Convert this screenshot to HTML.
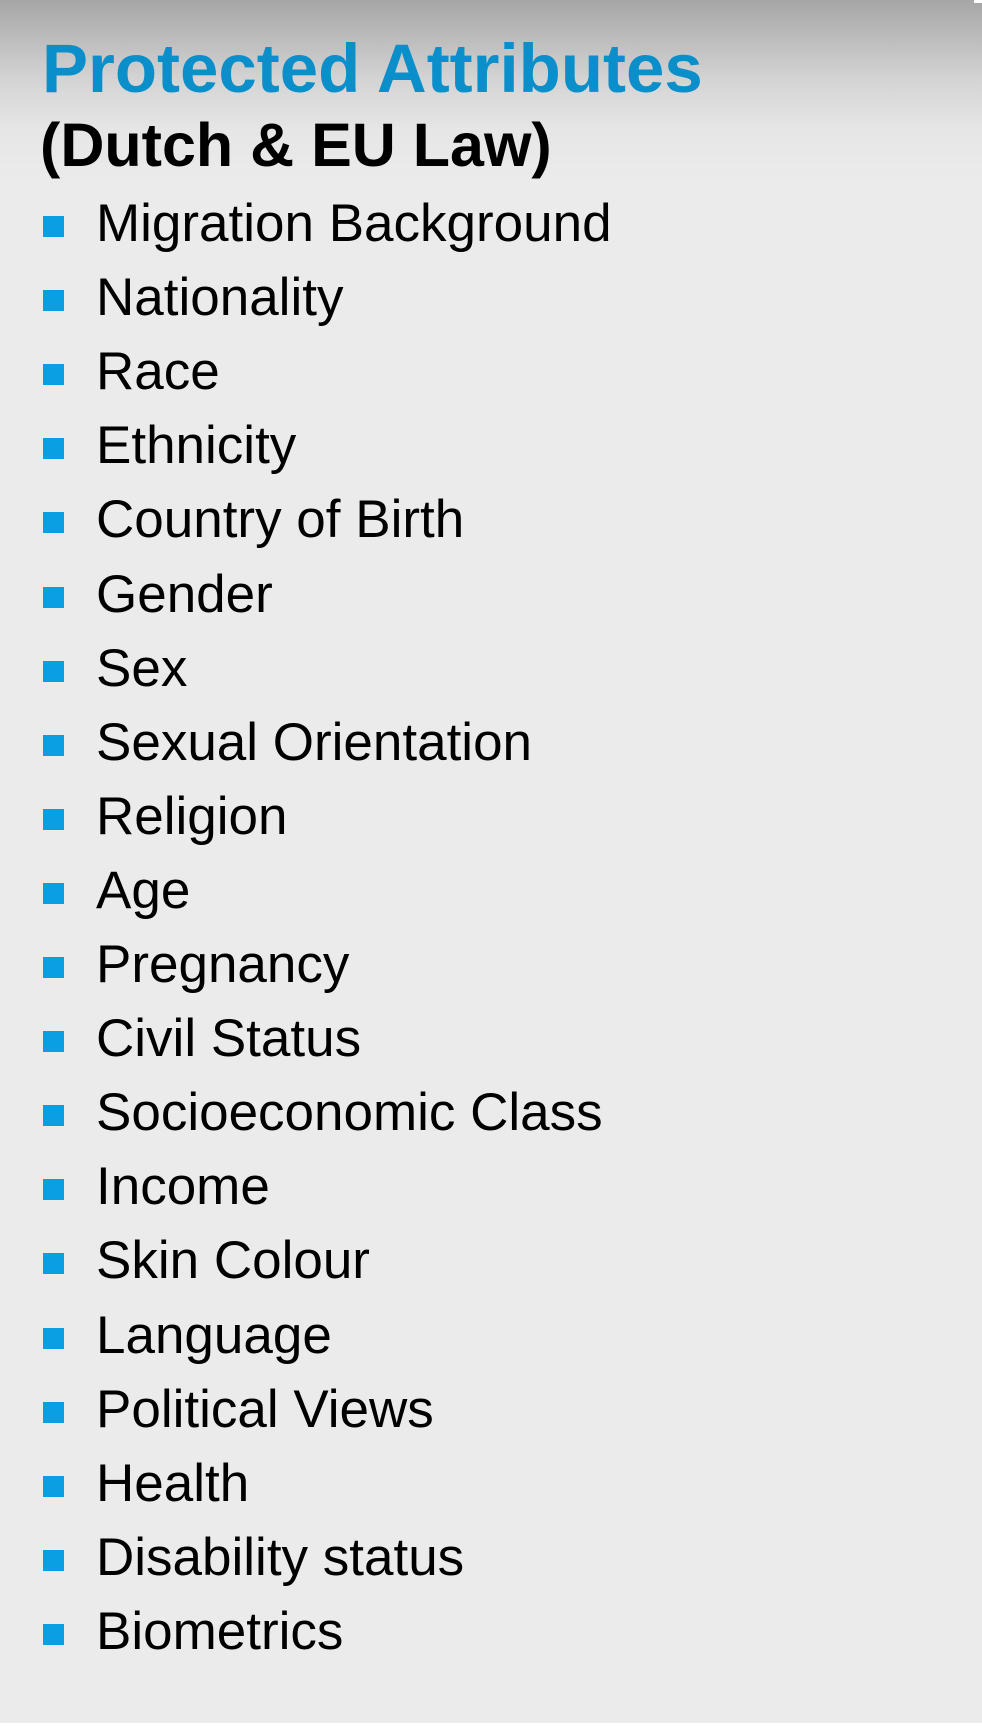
<!DOCTYPE html>
<html><head><meta charset="utf-8"><style>
html,body{margin:0;padding:0}
body{width:982px;height:1730px;position:relative;overflow:hidden;
background:linear-gradient(#a6a6a6 0px,#d4d4d4 80px,#e6e6e6 130px,#ebebeb 180px,#ebebeb 100%);
font-family:"Liberation Sans",sans-serif;}
.t{position:absolute;left:42px;top:34px;font-size:69px;font-weight:bold;color:#0b8fca;white-space:nowrap;line-height:1}
.s{position:absolute;left:40px;top:115px;font-size:61px;font-weight:bold;color:#000;white-space:nowrap;line-height:1}
.li{position:absolute;left:96px;font-size:53px;color:#000;white-space:nowrap;line-height:1;margin-top:-6px}
.b{position:absolute;left:43px;width:21px;height:21px;background:#0a9fe2}
.bot{position:absolute;left:0;right:0;top:1723px;bottom:0;background:#fff}
.cr{position:absolute;right:0;top:0;width:8px;height:3px;background:#fff}
</style></head><body>
<div class="cr"></div>
<div class="t">Protected Attributes</div>
<div class="s">(Dutch &amp; EU Law)</div>
<div class="li" style="top:203px">Migration Background</div><div class="b" style="top:216px"></div>
<div class="li" style="top:277px">Nationality</div><div class="b" style="top:290px"></div>
<div class="li" style="top:351px">Race</div><div class="b" style="top:364px"></div>
<div class="li" style="top:425px">Ethnicity</div><div class="b" style="top:438px"></div>
<div class="li" style="top:499px">Country of Birth</div><div class="b" style="top:512px"></div>
<div class="li" style="top:574px">Gender</div><div class="b" style="top:587px"></div>
<div class="li" style="top:648px">Sex</div><div class="b" style="top:661px"></div>
<div class="li" style="top:722px">Sexual Orientation</div><div class="b" style="top:735px"></div>
<div class="li" style="top:796px">Religion</div><div class="b" style="top:809px"></div>
<div class="li" style="top:870px">Age</div><div class="b" style="top:883px"></div>
<div class="li" style="top:944px">Pregnancy</div><div class="b" style="top:957px"></div>
<div class="li" style="top:1018px">Civil Status</div><div class="b" style="top:1031px"></div>
<div class="li" style="top:1092px">Socioeconomic Class</div><div class="b" style="top:1105px"></div>
<div class="li" style="top:1166px">Income</div><div class="b" style="top:1179px"></div>
<div class="li" style="top:1240px">Skin Colour</div><div class="b" style="top:1253px"></div>
<div class="li" style="top:1315px">Language</div><div class="b" style="top:1328px"></div>
<div class="li" style="top:1389px">Political Views</div><div class="b" style="top:1402px"></div>
<div class="li" style="top:1463px">Health</div><div class="b" style="top:1476px"></div>
<div class="li" style="top:1537px">Disability status</div><div class="b" style="top:1550px"></div>
<div class="li" style="top:1611px">Biometrics</div><div class="b" style="top:1624px"></div>
<div class="bot"></div>
</body></html>
